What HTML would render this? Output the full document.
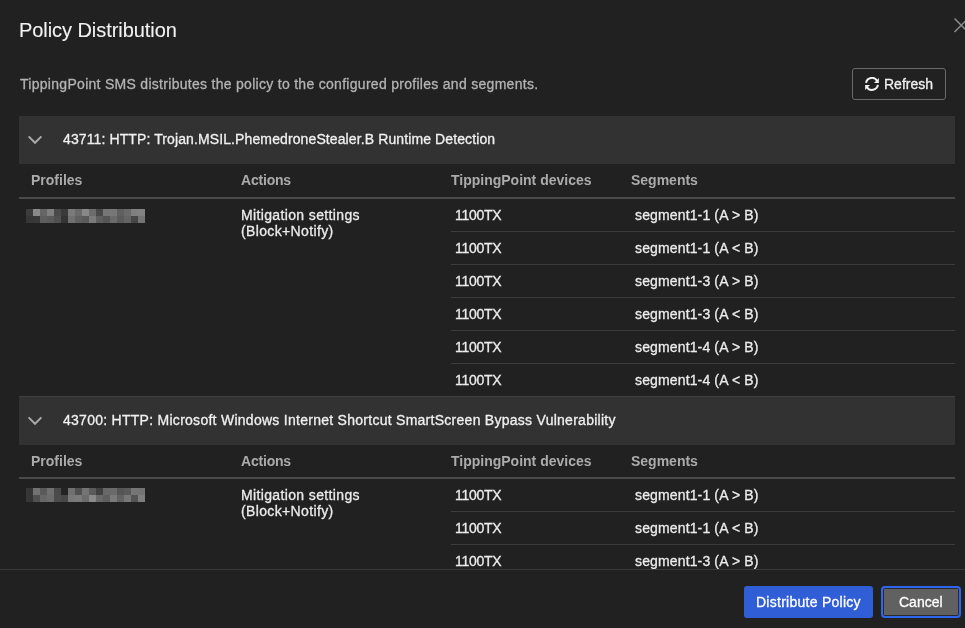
<!DOCTYPE html>
<html><head><meta charset="utf-8">
<style>
html,body{margin:0;padding:0}
body{-webkit-font-smoothing:antialiased;width:965px;height:628px;overflow:hidden;background:#212121;position:relative;font-family:"Liberation Sans",sans-serif;color:#e9e9e9;font-size:14px;line-height:16px}
.a{position:absolute;white-space:nowrap;will-change:transform;-webkit-text-stroke:0.3px currentColor}
.title{left:19px;top:18px;font-size:20px;line-height:24px;color:#f2f2f2;letter-spacing:-0.06px;-webkit-text-stroke:0.1px currentColor}
.desc{left:20px;top:76px;color:#b3b3b3;letter-spacing:0.29px}
.btn-ref{left:852px;top:68px;width:92px;height:30px;border:1px solid #6a6a6a;border-radius:3px}
.ref-txt{left:884px;top:76px;color:#f0f0f0}
.sec{left:19px;width:936px;height:48px;background:#323232}
.sec-txt{left:63px;color:#f0f0f0}
.th{color:#ababab;font-weight:bold;-webkit-text-stroke:0}
.thline{left:19px;width:936px;height:2px;background:#4a4a4a}
.rline{left:451px;width:504px;height:1px;background:#3c3c3c}
.td{color:#ececec}
.dev{letter-spacing:-0.26px}
.seg{letter-spacing:0.14px}
.mit{letter-spacing:0.36px}
.pix{left:26px;width:119px;height:14px}
.footline{left:0;top:569px;width:965px;height:1px;background:#3a3a3a}
.footer{left:0;top:570px;width:965px;height:58px;background:#212121}
.b-dist{left:744px;top:586px;width:129px;height:32px;background:#2f5ed6;border-radius:3px}
.b-dist-t{left:756px;top:594px;color:#fff;letter-spacing:0.26px}
.b-can{left:881px;top:586px;width:76px;height:28px;border:2px solid #2f66ee;border-radius:4px;background:#2a2a2a}
.b-can-i{left:884px;top:589px;width:74px;height:26px;background:#616161}
.b-can-t{left:899px;top:594px;color:#fff}
</style></head><body>
<div class="a title">Policy Distribution</div>
<svg class="a" style="left:950px;top:14px" width="20" height="22" viewBox="0 0 20 22"><path d="M4.5 4.5 L18 18 M4.5 18 L18 4.5" stroke="#8c8c8c" stroke-width="1.5" fill="none"/></svg>
<div class="a desc">TippingPoint SMS distributes the policy to the configured profiles and segments.</div>
<div class="a btn-ref"></div>
<svg class="a" style="left:865px;top:77px" width="14" height="14" viewBox="0 0 14 14"><g fill="none" stroke="#f2f2f2" stroke-width="2"><path d="M1.08 5.9 A6 6 0 0 1 12.2 3.9"/><path d="M12.92 7.9 A6 6 0 0 1 1.8 9.9"/></g><g fill="#f2f2f2"><path d="M9 5.9 L13.9 5.9 L13.9 0.9 Z"/><path d="M5 7.9 L0.1 7.9 L0.1 12.9 Z"/></g></svg>
<div class="a ref-txt">Refresh</div>

<!-- section 1 -->
<div class="a sec" style="top:116px"></div>
<svg class="a" style="left:26px;top:134px" width="18" height="12" viewBox="0 0 18 12"><polyline points="2.6,2.4 9,8.8 15.4,2.4" stroke="#a9a9a9" stroke-width="2" fill="none"/></svg>
<div class="a sec-txt" style="top:131px;letter-spacing:0.11px">43711: HTTP: Trojan.MSIL.PhemedroneStealer.B Runtime Detection</div>
<div class="a th" style="left:31px;top:172px">Profiles</div>
<div class="a th" style="left:241px;top:172px;letter-spacing:-0.2px">Actions</div>
<div class="a th" style="left:451px;top:172px">TippingPoint devices</div>
<div class="a th" style="left:631px;top:172px">Segments</div>
<div class="a thline" style="top:197px"></div>
<svg class="a" style="left:26px;top:209px" width="119" height="14" shape-rendering="crispEdges"><rect x="0" y="0" width="7" height="7" fill="#3c3c3c"/><rect x="7" y="0" width="7" height="7" fill="#8a8a8a"/><rect x="14" y="0" width="7" height="7" fill="#666666"/><rect x="21" y="0" width="7" height="7" fill="#808080"/><rect x="28" y="0" width="7" height="7" fill="#4a4a4a"/><rect x="35" y="0" width="7" height="7" fill="#3a3a3a"/><rect x="42" y="0" width="7" height="7" fill="#7a7a7a"/><rect x="49" y="0" width="7" height="7" fill="#6a6a6a"/><rect x="56" y="0" width="7" height="7" fill="#888888"/><rect x="63" y="0" width="7" height="7" fill="#6c6c6c"/><rect x="70" y="0" width="7" height="7" fill="#484848"/><rect x="77" y="0" width="7" height="7" fill="#767676"/><rect x="84" y="0" width="7" height="7" fill="#777777"/><rect x="91" y="0" width="7" height="7" fill="#606060"/><rect x="98" y="0" width="7" height="7" fill="#6a6a6a"/><rect x="105" y="0" width="7" height="7" fill="#808080"/><rect x="112" y="0" width="7" height="7" fill="#828282"/><rect x="0" y="7" width="7" height="7" fill="#363636"/><rect x="7" y="7" width="7" height="7" fill="#383838"/><rect x="14" y="7" width="7" height="7" fill="#5e5e5e"/><rect x="21" y="7" width="7" height="7" fill="#5a5a5a"/><rect x="28" y="7" width="7" height="7" fill="#505050"/><rect x="35" y="7" width="7" height="7" fill="#333333"/><rect x="42" y="7" width="7" height="7" fill="#707070"/><rect x="49" y="7" width="7" height="7" fill="#606060"/><rect x="56" y="7" width="7" height="7" fill="#5a5a5a"/><rect x="63" y="7" width="7" height="7" fill="#7a7a7a"/><rect x="70" y="7" width="7" height="7" fill="#5e5e5e"/><rect x="77" y="7" width="7" height="7" fill="#555555"/><rect x="84" y="7" width="7" height="7" fill="#6a6a6a"/><rect x="91" y="7" width="7" height="7" fill="#5a5a5a"/><rect x="98" y="7" width="7" height="7" fill="#646464"/><rect x="105" y="7" width="7" height="7" fill="#474747"/><rect x="112" y="7" width="7" height="7" fill="#757575"/></svg>
<div class="a td mit" style="left:241px;top:207px">Mitigation settings<br>(Block+Notify)</div>
<div class="a td dev" style="left:455px;top:207px">1100TX</div><div class="a td seg" style="left:635px;top:207px">segment1-1 (A &gt; B)</div>
<div class="a rline" style="top:231px"></div>
<div class="a td dev" style="left:455px;top:240px">1100TX</div><div class="a td seg" style="left:635px;top:240px">segment1-1 (A &lt; B)</div>
<div class="a rline" style="top:264px"></div>
<div class="a td dev" style="left:455px;top:273px">1100TX</div><div class="a td seg" style="left:635px;top:273px">segment1-3 (A &gt; B)</div>
<div class="a rline" style="top:297px"></div>
<div class="a td dev" style="left:455px;top:306px">1100TX</div><div class="a td seg" style="left:635px;top:306px">segment1-3 (A &lt; B)</div>
<div class="a rline" style="top:330px"></div>
<div class="a td dev" style="left:455px;top:339px">1100TX</div><div class="a td seg" style="left:635px;top:339px">segment1-4 (A &gt; B)</div>
<div class="a rline" style="top:363px"></div>
<div class="a td dev" style="left:455px;top:372px">1100TX</div><div class="a td seg" style="left:635px;top:372px">segment1-4 (A &lt; B)</div>

<!-- section 2 -->
<div class="a sec" style="top:397px"></div>
<div class="a" style="left:19px;top:396px;width:936px;height:1px;background:#404040"></div>
<svg class="a" style="left:26px;top:415px" width="18" height="12" viewBox="0 0 18 12"><polyline points="2.6,2.4 9,8.8 15.4,2.4" stroke="#a9a9a9" stroke-width="2" fill="none"/></svg>
<div class="a sec-txt" style="top:412px;letter-spacing:0.27px">43700: HTTP: Microsoft Windows Internet Shortcut SmartScreen Bypass Vulnerability</div>
<div class="a th" style="left:31px;top:453px">Profiles</div>
<div class="a th" style="left:241px;top:453px;letter-spacing:-0.2px">Actions</div>
<div class="a th" style="left:451px;top:453px">TippingPoint devices</div>
<div class="a th" style="left:631px;top:453px">Segments</div>
<div class="a thline" style="top:477px"></div>
<svg class="a" style="left:26px;top:488px" width="119" height="14" shape-rendering="crispEdges"><rect x="0" y="0" width="7" height="7" fill="#363636"/><rect x="7" y="0" width="7" height="7" fill="#727272"/><rect x="14" y="0" width="7" height="7" fill="#5a5a5a"/><rect x="21" y="0" width="7" height="7" fill="#707070"/><rect x="28" y="0" width="7" height="7" fill="#4a4a4a"/><rect x="35" y="0" width="7" height="7" fill="#232323"/><rect x="42" y="0" width="7" height="7" fill="#707070"/><rect x="49" y="0" width="7" height="7" fill="#505050"/><rect x="56" y="0" width="7" height="7" fill="#747474"/><rect x="63" y="0" width="7" height="7" fill="#5a5a5a"/><rect x="70" y="0" width="7" height="7" fill="#404040"/><rect x="77" y="0" width="7" height="7" fill="#686868"/><rect x="84" y="0" width="7" height="7" fill="#6a6a6a"/><rect x="91" y="0" width="7" height="7" fill="#555555"/><rect x="98" y="0" width="7" height="7" fill="#5a5a5a"/><rect x="105" y="0" width="7" height="7" fill="#767676"/><rect x="112" y="0" width="7" height="7" fill="#747474"/><rect x="0" y="7" width="7" height="7" fill="#363636"/><rect x="7" y="7" width="7" height="7" fill="#505050"/><rect x="14" y="7" width="7" height="7" fill="#676767"/><rect x="21" y="7" width="7" height="7" fill="#6c6c6c"/><rect x="28" y="7" width="7" height="7" fill="#4c4c4c"/><rect x="35" y="7" width="7" height="7" fill="#474747"/><rect x="42" y="7" width="7" height="7" fill="#787878"/><rect x="49" y="7" width="7" height="7" fill="#7a7a7a"/><rect x="56" y="7" width="7" height="7" fill="#6c6c6c"/><rect x="63" y="7" width="7" height="7" fill="#8a8a8a"/><rect x="70" y="7" width="7" height="7" fill="#686868"/><rect x="77" y="7" width="7" height="7" fill="#5e5e5e"/><rect x="84" y="7" width="7" height="7" fill="#7a7a7a"/><rect x="91" y="7" width="7" height="7" fill="#626262"/><rect x="98" y="7" width="7" height="7" fill="#777777"/><rect x="105" y="7" width="7" height="7" fill="#545454"/><rect x="112" y="7" width="7" height="7" fill="#7e7e7e"/></svg>
<div class="a td mit" style="left:241px;top:487px">Mitigation settings<br>(Block+Notify)</div>
<div class="a td dev" style="left:455px;top:487px">1100TX</div><div class="a td seg" style="left:635px;top:487px">segment1-1 (A &gt; B)</div>
<div class="a rline" style="top:511px"></div>
<div class="a td dev" style="left:455px;top:520px">1100TX</div><div class="a td seg" style="left:635px;top:520px">segment1-1 (A &lt; B)</div>
<div class="a rline" style="top:544px"></div>
<div class="a td dev" style="left:455px;top:553px">1100TX</div><div class="a td seg" style="left:635px;top:553px">segment1-3 (A &gt; B)</div>

<!-- footer -->
<div class="a footer"></div>
<div class="a footline"></div>
<div class="a b-dist"></div>
<div class="a b-dist-t">Distribute Policy</div>
<div class="a b-can"></div>
<div class="a b-can-i"></div>
<div class="a b-can-t">Cancel</div>
</body></html>
